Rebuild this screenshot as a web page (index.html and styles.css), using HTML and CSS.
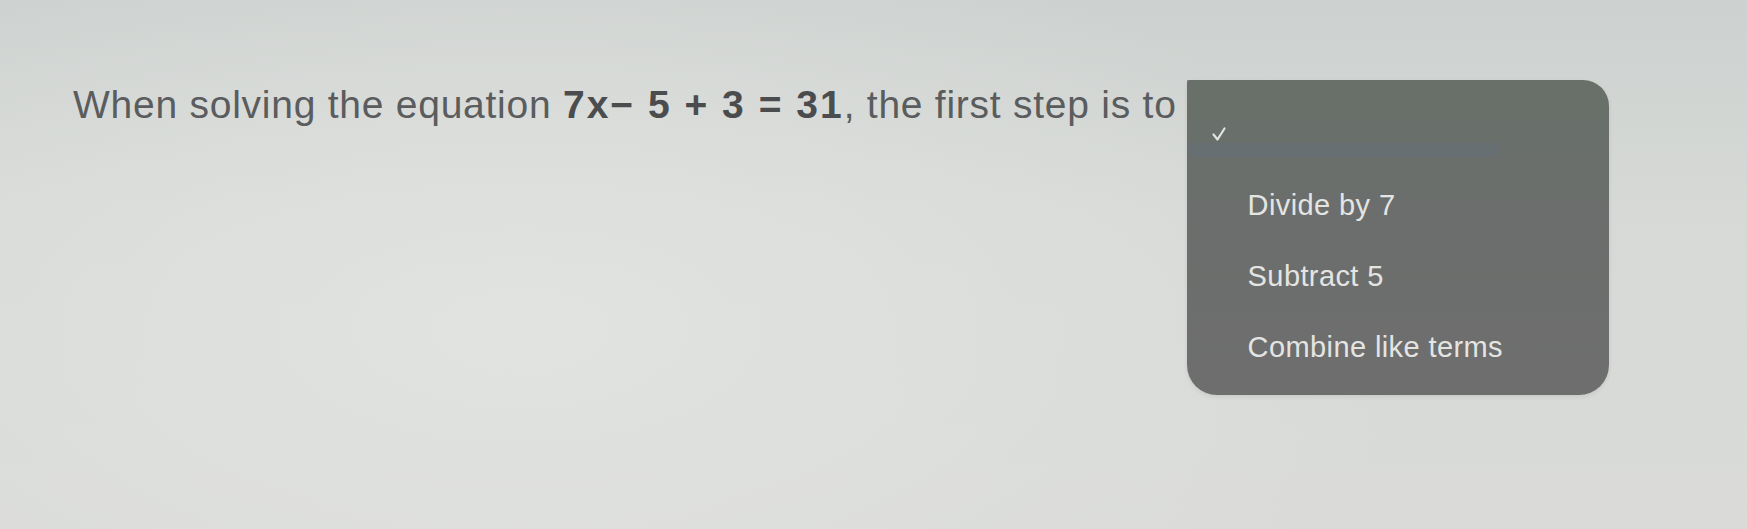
FILE: index.html
```html
<!DOCTYPE html>
<html lang="en">
<head>
<meta charset="utf-8">
<title>Question</title>
<link rel="stylesheet" href="styles.css">
</head>
<body>
<div class="question">
  <span class="prompt">When solving the equation <b class="eq">7x− 5 + 3 = 31</b>, the first step is to</span>
  <div class="select">
    <div class="menu">
      <div class="check-row">
        <svg class="check" width="18" height="18" viewBox="0 0 18 18"><path d="M3.5 9.5 L7.5 14.5 L14.5 3.5" fill="none" stroke="#e2e4e2" stroke-width="2.2" stroke-linecap="round" stroke-linejoin="round"/></svg>
      </div>
      <div class="band"></div>
      <ul class="options">
        <li class="opt">Divide by 7</li>
        <li class="opt">Subtract 5</li>
        <li class="opt">Combine like terms</li>
      </ul>
    </div>
  </div>
</div>
</body>
</html>
```
FILE: styles.css
```css
html, body {
  margin: 0;
  padding: 0;
  width: 1747px;
  height: 529px;
  overflow: hidden;
}
body {
  font-family: "Liberation Sans", Arial, sans-serif;
  background:
    radial-gradient(ellipse 900px 420px at 520px 330px, #e1e3e0 0%, rgba(225,227,224,0) 100%),
    linear-gradient(180deg, #cdd1cf 0%, #d6d9d6 40%, #dadbd8 100%),
    #d6d8d5;
}
.question {
  display: flex;
  align-items: flex-start;
  padding: 82px 0 0 73px;
}
.prompt {
  font-size: 39px;
  line-height: 1.2;
  letter-spacing: 0.75px;
  color: #5a5c5e;
  white-space: nowrap;
}
.eq {
  font-weight: 700;
  letter-spacing: 2px;
  color: #4a4c4d;
}
.select {
  position: relative;
  width: 383px;
  height: 36px;
  margin-left: 10px;
  margin-top: -2px;
  border: 2px solid #8585b8;
  box-sizing: border-box;
}
.menu {
  position: absolute;
  top: -2px;
  left: -2px;
  width: 422px;
  height: 315px;
  box-sizing: border-box;
  background: linear-gradient(180deg, #687069 0%, #6b6e6c 40%, #6e6e6e 100%);
  border-radius: 4px 26px 30px 30px;
  box-shadow: 0 2px 4px rgba(0,0,0,0.08);
  display: flex;
  flex-direction: column;
}
.check-row {
  height: 63px;
  display: flex;
  align-items: flex-end;
  padding-left: 23px;
  box-sizing: border-box;
}
.check {
  display: block;
  margin-bottom: 0;
}
.band {
  height: 14px;
  width: 312px;
  background: #667078;
  opacity: 0.55;
}
.options {
  list-style: none;
  margin: 13px 0 0;
  padding: 0 0 0 61px;
}
.opt {
  font-size: 29px;
  line-height: 71px;
  letter-spacing: 0.4px;
  color: #e4e5e3;
  white-space: nowrap;
}
```
